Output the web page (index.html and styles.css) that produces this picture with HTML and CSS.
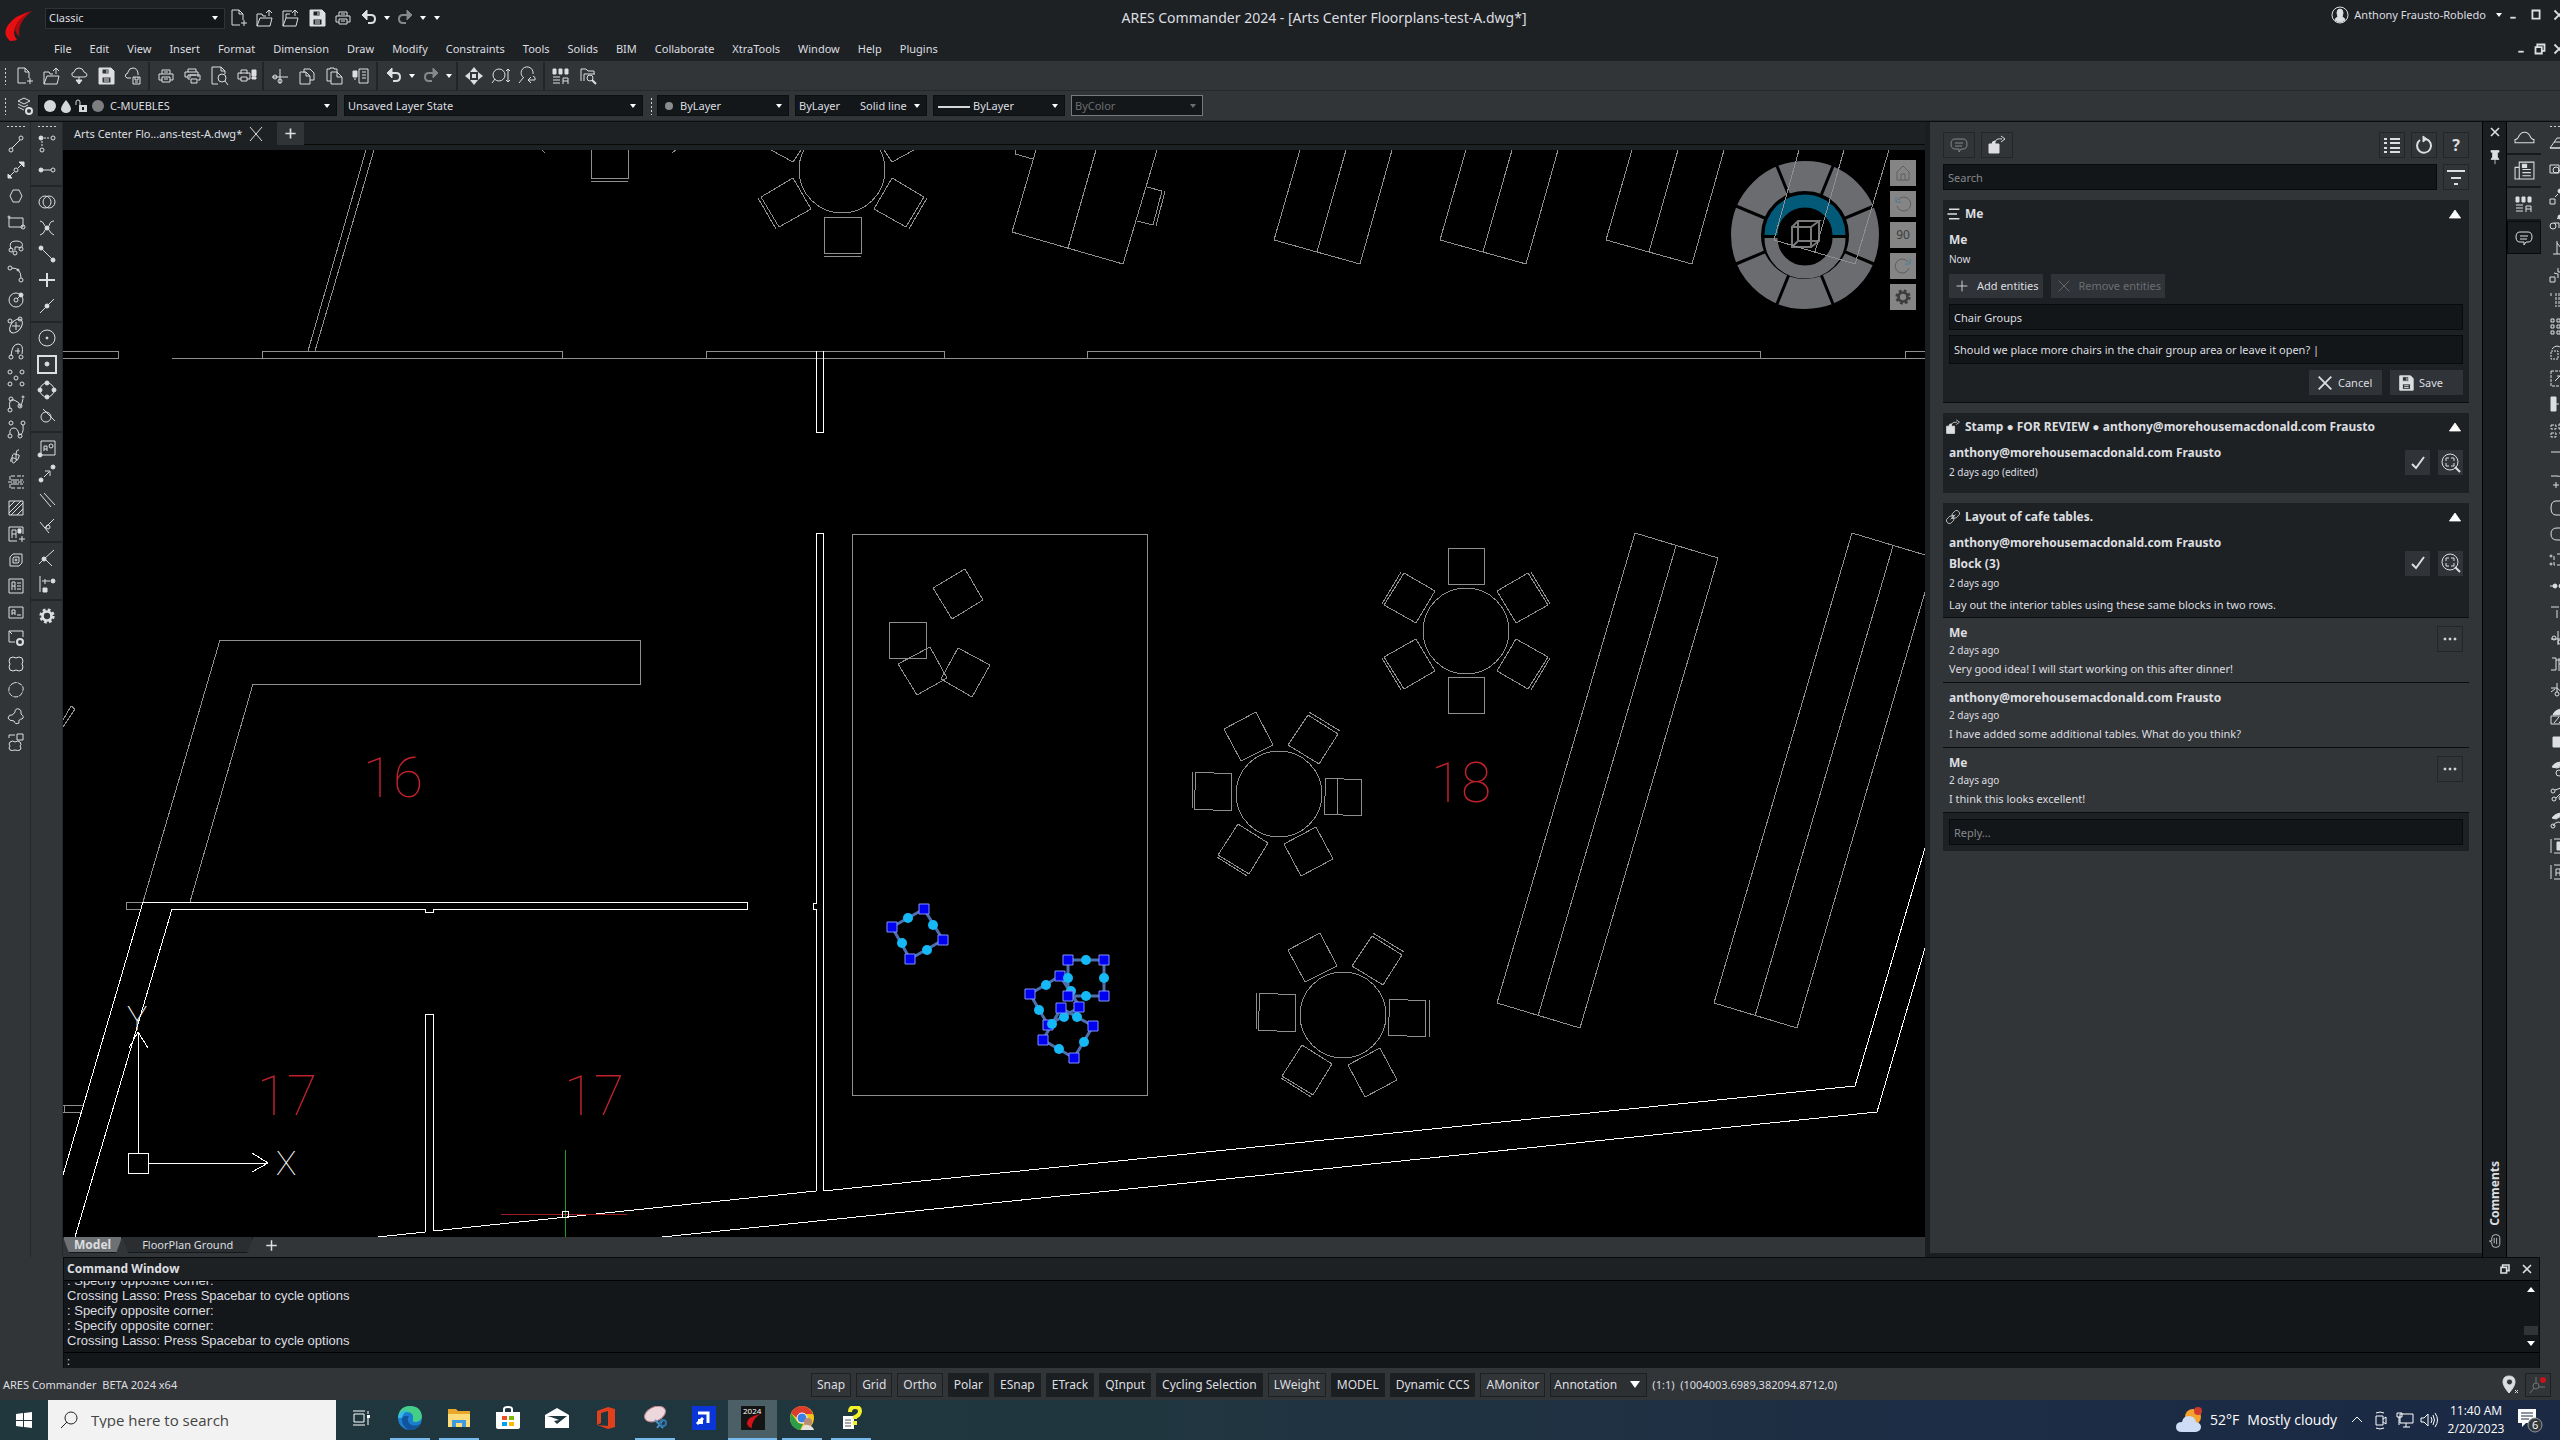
FILE: index.html
```html
<!DOCTYPE html>
<html lang="en">

<head>
    <meta charset="UTF-8">
    <meta name="viewport" content="width=device-width, initial-scale=1.0">
    <title>ARES Commander 2024</title>
    <link rel="stylesheet" href="styles.css">
</head>

<body>
    <!-- shared icons -->
    <svg class="symbols" aria-hidden="true">
        <symbol id="new" viewBox="0 0 20 20"><path d="M11 17H3V2h7l4 4v6M10 2v4h4M15 12v6M12 15h6"/></symbol>
        <symbol id="open" viewBox="0 0 20 20"><path d="M2 18V6h5l1 2h3M2 18l3-8h12l-2 8zM14 8V2M11 5l3-3 3 3"/></symbol>
        <symbol id="save" viewBox="0 0 20 20"><path class="f" d="M3 2h12l3 3v13H3zM6 3v5h7V3zM6 11v6h9v-6z" fill-rule="evenodd"/><path d="M11 4v3M8 13h5M8 15h5"/></symbol>
        <symbol id="print" viewBox="0 0 20 20"><path d="M6 8V4h8v4M6 14H3V8h14v6h-3M6 11h8v5H6zM8 6h4M8 13h4"/></symbol>
        <symbol id="undo" viewBox="0 0 20 20"><path class="w" d="M5 7h7q4 0 4 4t-4 4H9"/><path class="f" d="M3 7l5-5v10z"/></symbol>
        <symbol id="redo" viewBox="0 0 20 20"><path class="w" d="M15 7H8q-4 0-4 4t4 4h3"/><path class="f" d="M17 7l-5-5v10z"/></symbol>
        <symbol id="comment" viewBox="0 0 20 20"><path d="M6 4h8q4 0 4 5t-4 5h-2l-2 3v-3H6q-4 0-4-5t4-5zM6 8h8M6 11h7"/></symbol>
        <symbol id="stamp" viewBox="0 0 20 20"><path class="f" d="M2 9h10v9H2zM5 9q0-3 3-3v3z"/><path d="M8 7q1-4 7-3M14 1l4 3-4 3"/></symbol>
        <symbol id="up" viewBox="0 0 20 20"><path class="f" d="M10 5l7 10H3z"/></symbol>
        <symbol id="check" viewBox="0 0 20 20"><path class="w" d="M4 11l4 4 8-11"/></symbol>
        <symbol id="zoomto" viewBox="0 0 20 20"><circle cx="9" cy="9" r="8"/><path d="M5 8V5h3M10 5h3v3M13 10v3h-3M8 13H5v-3"/><path class="w" d="M14 14l5 5"/></symbol>
        <symbol id="palette" viewBox="0 0 20 20"><path class="f" d="M2 3h3v5H2zM8 3h3v5H8zM14 3h3v5h-3z"/><path d="M2 11h7M2 14h7M2 17h7M12 18v-6h5v6M12 15h5"/></symbol>
        <symbol id="gear" viewBox="0 0 20 20"><circle cx="10" cy="10" r="5" stroke-width="3"/><circle cx="10" cy="10" r="7" stroke-width="3" stroke-dasharray="3 2.5"/></symbol>
        <symbol id="close" viewBox="0 0 20 20"><path class="w" d="M5 5l10 10M15 5L5 15"/></symbol>
        <symbol id="restore" viewBox="0 0 20 20"><path class="w" d="M7 8V5h8v7h-3M5 8h7v7H5z"/></symbol>
        <symbol id="dots" viewBox="0 0 20 20"><circle class="f" cx="5" cy="10" r="1"/><circle class="f" cx="10" cy="10" r="1"/><circle class="f" cx="15" cy="10" r="1"/></symbol>
    </svg>

    <header class="title-bar">
        <svg class="logo" viewBox="0 0 27 30" aria-hidden="true"><path fill="#e80f12" d="M27 0Q10 4 3 14Q-3 23 5 30Q9 30 12 29Q6 22 12 13Q17 5 27 0z"/><path fill="#ae0b0e" d="M27 0Q17 8 15 15Q13 22 15 26Q7 20 12 12Q17 5 27 0z"/></svg>
        <div class="quick">
            <div class="pick workspace"><select aria-label="Workspace"><option>Classic</option></select></div>
            <button class="tool" aria-label="New"><svg class="ico"><use href="#new"/></svg></button>
            <button class="tool" aria-label="Open"><svg class="ico"><use href="#open"/></svg></button>
            <button class="tool" aria-label="Open from cloud"><svg class="ico" viewBox="0 0 20 20"><path d="M2 18V3h9M2 18l3-8h12l-2 8zM5 6h4M14 8V2M11 5l3-3 3 3M5 6v4"/></svg></button>
            <button class="tool" aria-label="Save"><svg class="ico"><use href="#save"/></svg></button>
            <button class="tool" aria-label="Print"><svg class="ico"><use href="#print"/></svg></button>
            <button class="tool" aria-label="Undo"><svg class="ico"><use href="#undo"/></svg></button>
            <button class="drop" aria-label="Undo list"></button>
            <button class="tool dim" aria-label="Redo"><svg class="ico"><use href="#redo"/></svg></button>
            <button class="drop" aria-label="Redo list"></button>
            <button class="drop line" aria-label="Customize"></button>
        </div>
        <h1>ARES Commander 2024 - [Arts Center Floorplans-test-A.dwg*]</h1>
        <div class="user">
            <svg class="ico" viewBox="0 0 20 20"><circle cx="10" cy="10" r="8"/><path class="f" d="M10 4q3 0 3 4l-1 4q3 1 3 3-5 4-10 0 0-2 3-3L7 8q0-4 3-4z"/></svg>
            <span>Anthony Frausto-Robledo</span>
            <button class="drop" aria-label="Account"></button>
            <button class="win" aria-label="Minimize"><svg class="ico" viewBox="0 0 20 20"><path class="w" d="M7 13h6"/></svg></button>
            <button class="win" aria-label="Maximize"><svg class="ico" viewBox="0 0 20 20"><path class="w" d="M6 5h8v9H6z"/></svg></button>
            <button class="win" aria-label="Close"><svg class="ico"><use href="#close"/></svg></button>
        </div>
        <nav class="menu">
            <a href="#">File</a><a href="#">Edit</a><a href="#">View</a><a href="#">Insert</a><a href="#">Format</a><a href="#">Dimension</a><a href="#">Draw</a><a href="#">Modify</a><a href="#">Constraints</a><a href="#">Tools</a><a href="#">Solids</a><a href="#">BIM</a><a href="#">Collaborate</a><a href="#">XtraTools</a><a href="#">Window</a><a href="#">Help</a><a href="#">Plugins</a>
        </nav>
        <div class="doc-win">
            <button class="win" aria-label="Minimize drawing"><svg class="ico" viewBox="0 0 20 20"><path class="w" d="M7 13h6"/></svg></button>
            <button class="win" aria-label="Restore drawing"><svg class="ico"><use href="#restore"/></svg></button>
            <button class="win" aria-label="Close drawing"><svg class="ico"><use href="#close"/></svg></button>
        </div>
    </header>

    <div class="toolbar">
        <span class="grip"></span>
        <button class="tool" aria-label="New"><svg class="ico"><use href="#new"/></svg></button>
        <button class="tool" aria-label="Open"><svg class="ico"><use href="#open"/></svg></button>
        <button class="tool" aria-label="From cloud"><svg class="ico" viewBox="0 0 20 20"><path d="M5 11q-3-1-2-4 2 0 2-1 1-4 5-4t5 4q3 1 3 3t-3 2zM10 11v5"/><path class="f" d="M7 14h6l-3 4z"/></svg></button>
        <button class="tool" aria-label="Save"><svg class="ico"><use href="#save"/></svg></button>
        <button class="tool" aria-label="Save to cloud"><svg class="ico" viewBox="0 0 20 20"><path d="M8 12H4q-3-1-1-4 2 0 2-2 1-4 5-4t5 5v2M10 11h7v7h-7zM12 11v3h3v-3M12 16h3"/></svg></button>
        <i class="sep"></i>
        <button class="tool" aria-label="Print"><svg class="ico"><use href="#print"/></svg></button>
        <button class="tool" aria-label="Batch print"><svg class="ico" viewBox="0 0 20 20"><path d="M5 6V3h8v3M5 11H2V6h13v5M5 9h8M7 13H5V9M7 12V9h10v5h-2M8 13h6v4H8z"/></svg></button>
        <button class="tool" aria-label="Preview"><svg class="ico" viewBox="0 0 20 20"><path d="M8 18H2V1h9l4 4v3M11 1v4h4"/><circle cx="12" cy="12" r="4"/><path d="M15 15l3 4"/></svg></button>
        <button class="tool" aria-label="Publish"><svg class="ico" viewBox="0 0 20 20"><path d="M4 8V4h6v4M4 13H1V7h12v6h-3M4 11h6v4H4z"/><path class="f" d="M15 4h4v6h-4zM15 11h4v2h-4z"/></svg></button>
        <i class="sep"></i>
        <button class="tool" aria-label="Cut"><svg class="ico" viewBox="0 0 20 20"><path d="M10 3v15M2 11h16"/><circle cx="5" cy="11" r="2"/><circle cx="10" cy="15" r="2"/></svg></button>
        <button class="tool" aria-label="Copy"><svg class="ico" viewBox="0 0 20 20"><path d="M7 7V3h6l4 4v7h-4M3 6h6l4 4v8H3zM9 6v4h4"/></svg></button>
        <button class="tool" aria-label="Paste"><svg class="ico" viewBox="0 0 20 20"><path d="M7 15H3V3h3V2h4v1h3v3M7 6h6l5 5v7H7zM13 6v5h5"/></svg></button>
        <button class="tool" aria-label="Properties painter"><svg class="ico" viewBox="0 0 20 20"><path d="M8 3h9v14H8zM11 6h4M11 9h4M11 12h4M3 13h2"/><path class="f" d="M2 5h4v6H2z"/></svg></button>
        <i class="sep"></i>
        <button class="tool" aria-label="Undo"><svg class="ico"><use href="#undo"/></svg></button>
        <button class="drop" aria-label="Undo list"></button>
        <button class="tool dim" aria-label="Redo"><svg class="ico"><use href="#redo"/></svg></button>
        <button class="drop dim" aria-label="Redo list"></button>
        <i class="sep"></i>
        <button class="tool" aria-label="Pan"><svg class="ico" viewBox="0 0 20 20"><path class="f" stroke="none" d="M10 1l4 5H6zM10 19l4-5H6zM1 10l5-4v8zM19 10l-5-4v8zM8 8h4v4H8z"/></svg></button>
        <button class="tool" aria-label="Dynamic zoom"><svg class="ico" viewBox="0 0 20 20"><circle cx="8" cy="9" r="6"/><path d="M4 13l-3 4M17 3v13M15 5l2-2 2 2M15 14l2 2 2-2"/></svg></button>
        <button class="tool" aria-label="Zoom previous"><svg class="ico" viewBox="0 0 20 20"><path d="M6 12A6 6 0 1 1 15 8M5 12l-4 5M10 14h7M10 14l3-3M10 14l3 3M17 14q1-3-2-4"/></svg></button>
        <i class="sep"></i>
        <button class="tool" aria-label="Tool palettes"><svg class="ico"><use href="#palette"/></svg></button>
        <button class="tool" aria-label="Design resources"><svg class="ico" viewBox="0 0 20 20"><path d="M3 15V3h5l2 2h6v3M6 15V8h11"/><circle cx="12" cy="12" r="3"/><path class="w" d="M14 14l4 4"/></svg></button>
    </div>

    <div class="toolbar props">
        <span class="grip"></span>
        <button class="tool" aria-label="Layers manager"><svg class="ico" viewBox="0 0 20 20"><path d="M3 5l6-3 6 3-6 3zM3 8l6 3 4-2M3 11l6 3"/><circle class="w" cx="14" cy="15" r="3"/></svg></button>
        <div class="pick layer">
            <svg class="marks" viewBox="0 0 68 20" aria-hidden="true"><circle cx="11" cy="10" r="6"/><path d="M27 4q5 6 5 9a5 4 0 0 1-10 0q0-3 5-9z"/><path d="M40 9h8v7h-8z"/><path d="M37 9V6q0-2 2-2t2 2v4" fill="none" stroke="#d4d6d8"/><path d="M43 11h2v3h-2z" fill="#14171a"/><circle cx="59" cy="10" r="6" fill="#7c7e80"/></svg>
            <select aria-label="Layer"><option>C-MUEBLES</option></select>
        </div>
        <div class="pick state"><select aria-label="Layer state"><option>Unsaved Layer State</option></select></div>
        <span class="grip"></span>
        <div class="pick small">
            <svg class="marks" viewBox="0 0 19 20" aria-hidden="true"><circle cx="11" cy="10" r="4" fill="#8a8c8e"/></svg>
            <select aria-label="Line color"><option>ByLayer</option></select>
        </div>
        <div class="pick small"><select aria-label="Line style"><option>ByLayer &nbsp; &nbsp; &nbsp; Solid line</option></select></div>
        <div class="pick small">
            <svg class="marks" viewBox="0 0 36 20" aria-hidden="true"><path d="M4 10h32v2H4z"/></svg>
            <select aria-label="Line weight"><option>ByLayer</option></select>
        </div>
        <div class="pick small off"><select aria-label="Print style" disabled><option>ByColor</option></select></div>
    </div>

    <main class="work">
        <div class="side" role="toolbar" aria-label="Draw">
            <span class="grip flat"></span>
            <button class="tool" aria-label="Line"><svg class="ico" viewBox="0 0 20 20"><circle cx="5" cy="16" r="2"/><circle cx="15" cy="4" r="2"/><path d="M6 14l8-8"/></svg></button>
            <button class="tool" aria-label="Infinite line"><svg class="ico" viewBox="0 0 20 20"><circle cx="10" cy="10" r="2"/><path d="M2 18l6-6M12 8l6-6"/><path class="f" d="M2 14v4h4zM18 2v5l-5-5z"/></svg></button>
            <button class="tool" aria-label="Polygon"><svg class="ico" viewBox="0 0 20 20"><path d="M7 4h6l3 6-3 6H7l-3-6z"/></svg></button>
            <button class="tool" aria-label="Rectangle"><svg class="ico" viewBox="0 0 20 20"><path d="M3 6h14v9H3z"/><circle cx="3" cy="5" r="1"/><circle cx="17" cy="15" r="2"/></svg></button>
            <button class="tool" aria-label="Polyline"><svg class="ico" viewBox="0 0 20 20"><path d="M5 11Q2 3 10 3t6 6M9 12V9h3l3 1"/><circle cx="5" cy="12" r="2"/><circle cx="9" cy="15" r="2"/><circle cx="15" cy="11" r="2"/></svg></button>
            <button class="tool" aria-label="Arc"><svg class="ico" viewBox="0 0 20 20"><circle cx="4" cy="4" r="2"/><circle cx="12" cy="6" r="1"/><circle cx="15" cy="16" r="2"/><path d="M6 4q9 0 9 10"/></svg></button>
            <button class="tool" aria-label="Circle"><svg class="ico" viewBox="0 0 20 20"><circle cx="10" cy="10" r="7"/><circle cx="10" cy="10" r="2"/><path d="M11 9l4-4"/><circle class="f" cx="15" cy="5" r="2"/></svg></button>
            <button class="tool" aria-label="Ellipse"><svg class="ico" viewBox="0 0 20 20"><ellipse cx="10" cy="10" rx="8" ry="5" transform="rotate(-50 10 10)"/><path d="M6 10h8M10 6v8"/><circle cx="4" cy="5" r="2"/><circle cx="14" cy="3" r="2"/></svg></button>
            <button class="tool" aria-label="Elliptical arc"><svg class="ico" viewBox="0 0 20 20"><path d="M5 14Q6 2 12 2t4 10M9 9h5M12 6v6"/><circle cx="5" cy="15" r="2"/><circle cx="15" cy="15" r="2"/></svg></button>
            <button class="tool" aria-label="Point"><svg class="ico" viewBox="0 0 20 20"><circle cx="4" cy="4" r="2"/><circle cx="16" cy="4" r="2"/><circle cx="10" cy="10" r="2"/><circle cx="4" cy="16" r="2"/><circle cx="16" cy="16" r="2"/></svg></button>
            <button class="tool" aria-label="Spline"><svg class="ico" viewBox="0 0 20 20"><path d="M4 15Q2 4 8 6t6 6 3-7"/><circle cx="4" cy="16" r="2"/><circle cx="5" cy="5" r="2"/><circle cx="14" cy="12" r="2"/><circle cx="17" cy="3" r="1"/></svg></button>
            <button class="tool" aria-label="Control spline"><svg class="ico" viewBox="0 0 20 20"><path d="M4 14Q3 8 8 8q4 0 5 7 5 0 4-10"/><circle cx="4" cy="16" r="2"/><circle cx="5" cy="3" r="2"/><circle cx="14" cy="16" r="2"/><circle cx="17" cy="3" r="2"/></svg></button>
            <button class="tool" aria-label="Sketch"><svg class="ico" viewBox="0 0 20 20"><path d="M5 16q-1-5 3-4t1 4-3-3 3-5 4 1-1 4-2-3 3-6"/></svg></button>
            <button class="tool" aria-label="Multiline"><svg class="ico" viewBox="0 0 20 20"><path d="M9 4H4v4h5M9 12H4v4h5M2 10h16M9 8h8M9 12h8M11 4h7M11 16h7" stroke-dasharray="4 1"/></svg></button>
            <button class="tool" aria-label="Hatch"><svg class="ico" viewBox="0 0 20 20"><path d="M3 3h14v14H3zM3 9l6-6M3 15L15 3M5 17L17 5M11 17l6-6"/></svg></button>
            <button class="tool" aria-label="Make block"><svg class="ico" viewBox="0 0 20 20"><path d="M11 17H3V3h14v7M6 14V6h4v8M6 10h4M16 12v6M13 15h6"/><path class="f" d="M12 5h3v4h-3z"/></svg></button>
            <button class="tool" aria-label="Region"><svg class="ico" viewBox="0 0 20 20"><path d="M7 4h9v9l-3 3H4V7zM8 7h5v5l-1 1H7V8z"/><circle cx="10" cy="10" r="1"/></svg></button>
            <button class="tool" aria-label="Note"><svg class="ico" viewBox="0 0 20 20"><path d="M3 3h14v14H3zM6 14V6h3v8M6 10h3M11 7h4M11 10h4M11 13h4"/></svg></button>
            <button class="tool" aria-label="Simple note"><svg class="ico" viewBox="0 0 20 20"><path d="M3 5h14v11H3zM6 13V8h3v5M6 11h3M11 13h4"/></svg></button>
            <button class="tool" aria-label="Mask"><svg class="ico" viewBox="0 0 20 20"><path d="M9 14H3V3h14v6M3 3l3 3"/><circle class="w" cx="14" cy="14" r="3"/></svg></button>
            <button class="tool" aria-label="Rectangular cloud"><svg class="ico" viewBox="0 0 20 20"><path d="M4 4q3-2 6 0 3-2 6 0 2 3 0 6 2 3 0 6-3 2-6 0-3 2-6 0-2-3 0-6-2-3 0-6z"/></svg></button>
            <button class="tool" aria-label="Elliptical cloud"><svg class="ico" viewBox="0 0 20 20"><path d="M6 4q4-3 8 0 4 2 3 6-1 5-4 6-3 2-7 0-4-3-3-7 0-3 3-5z" stroke-dasharray="5 1"/></svg></button>
            <button class="tool" aria-label="Freehand cloud"><svg class="ico" viewBox="0 0 20 20"><path d="M9 6q0-4 4-3 3 1 2 5 4 3 1 5-4 0-3 4-4 2-5-2-5 0-6-3 1-4 4-3 1 0 3-3z"/></svg></button>
            <button class="tool" aria-label="Revision cloud"><svg class="ico" viewBox="0 0 20 20"><path d="M3 6V3h6M11 2h6v6h-6zM4 10q3-2 5 0 3-2 5 0 2 3 0 4 2 2 0 4-2 1-5 0-3 1-5 0-2-2 0-4-2-2 0-4z"/></svg></button>
        </div>

        <div class="side" role="toolbar" aria-label="Entity snap">
            <span class="grip flat"></span>
            <button class="tool" aria-label="Track point"><svg class="ico" viewBox="0 0 20 20"><circle class="f" cx="4" cy="4" r="2"/><circle cx="16" cy="4" r="2"/><circle cx="5" cy="16" r="2"/><path d="M7 4h6M5 7v6" stroke-dasharray="2 1"/></svg></button>
            <button class="tool" aria-label="From"><svg class="ico" viewBox="0 0 20 20"><circle class="f" cx="4" cy="10" r="2"/><circle cx="16" cy="10" r="2"/><path d="M6 10h8"/></svg></button>
            <i class="sep"></i>
            <button class="tool" aria-label="Center snap"><svg class="ico" viewBox="0 0 20 20"><circle cx="8" cy="10" r="6"/><circle cx="12" cy="10" r="6"/></svg></button>
            <button class="tool" aria-label="Intersection"><svg class="ico" viewBox="0 0 20 20"><path d="M3 3q3 0 5 5l4 4q2 4 5 5M17 3q-4 0-5 5l-4 4q-1 4-5 5"/><circle class="f" cx="10" cy="10" r="2"/></svg></button>
            <button class="tool" aria-label="Endpoint"><svg class="ico" viewBox="0 0 20 20"><path d="M4 4l12 12"/><circle class="f" cx="4" cy="4" r="2"/><circle class="f" cx="16" cy="16" r="2"/></svg></button>
            <button class="tool" aria-label="Midpoint"><svg class="ico" viewBox="0 0 20 20"><path class="w" d="M2 10h16M10 3v14"/></svg></button>
            <button class="tool" aria-label="Nearest"><svg class="ico" viewBox="0 0 20 20"><path d="M3 17L17 3"/><circle class="f" cx="10" cy="10" r="2"/></svg></button>
            <i class="sep"></i>
            <button class="tool" aria-label="Center"><svg class="ico" viewBox="0 0 20 20"><circle cx="10" cy="10" r="8"/><circle class="f" cx="10" cy="10" r="1"/></svg></button>
            <button class="tool" aria-label="Node"><svg class="ico" viewBox="0 0 20 20"><path d="M1 2h18v17H1z" stroke-width="2"/><circle class="f" cx="10" cy="10" r="2"/></svg></button>
            <button class="tool" aria-label="Quadrant"><svg class="ico" viewBox="0 0 20 20"><circle cx="10" cy="10" r="7"/><circle class="f" cx="10" cy="3" r="2"/><circle class="f" cx="10" cy="17" r="2"/><circle class="f" cx="3" cy="10" r="2"/><circle class="f" cx="17" cy="10" r="2"/></svg></button>
            <button class="tool" aria-label="Tangent"><svg class="ico" viewBox="0 0 20 20"><circle cx="9" cy="11" r="5"/><path d="M6 3l12 12"/></svg></button>
            <i class="sep"></i>
            <button class="tool" aria-label="Insertion"><svg class="ico" viewBox="0 0 20 20"><path d="M4 3h14v14H4zM7 13V8h3v5M7 11h3"/><circle cx="14" cy="8" r="2"/><circle class="f" cx="3" cy="17" r="2"/></svg></button>
            <button class="tool" aria-label="Extension"><svg class="ico" viewBox="0 0 20 20"><circle class="f" cx="4" cy="16" r="2"/><circle class="f" cx="16" cy="3" r="2"/><path d="M7 13l5-5M8 7h5v5"/></svg></button>
            <button class="tool" aria-label="Parallel"><svg class="ico" viewBox="0 0 20 20"><path d="M3 4l11 13M7 3l11 12"/></svg></button>
            <button class="tool" aria-label="Perpendicular"><svg class="ico" viewBox="0 0 20 20"><path d="M3 6l9 11M8 12l9-9"/><circle cx="11" cy="11" r="2"/></svg></button>
            <i class="sep"></i>
            <button class="tool" aria-label="Apparent intersection"><svg class="ico" viewBox="0 0 20 20"><path d="M7 11l10-9M8 11l7 7M6 12l-4 4"/><circle class="f" cx="7" cy="11" r="2"/></svg></button>
            <button class="tool" aria-label="Distance"><svg class="ico" viewBox="0 0 20 20"><path d="M3 2v16M5 7h8M8 5v5"/><circle class="f" cx="16" cy="7" r="2"/><path class="f" d="M6 14h4v4H6z"/></svg></button>
            <i class="sep"></i>
            <button class="tool" aria-label="Snap settings"><svg class="ico gear"><use href="#gear"/></svg></button>
        </div>

        <section class="drawing">
            <div class="doc-tabs">
                <div class="doc-tab"><span>Arts Center Flo...ans-test-A.dwg*</span><button aria-label="Close drawing"><svg class="ico" viewBox="0 0 20 20"><path d="M4 3l12 14M16 3L4 17"/></svg></button></div>
                <button class="plus" aria-label="New drawing"><svg class="ico" viewBox="0 0 20 20"><path class="w" d="M10 4v12M4 10h12"/></svg></button>
            </div>

            <div class="canvas">
                <svg class="plan" viewBox="63 150 1862 1087" preserveAspectRatio="xMinYMin slice" role="img" aria-label="Floor plan">
                    <defs>
                        <g id="chair"><path d="M62-58L82-26 50-8 31-40zM65-59L84-27"/></g>
                        <g id="round">
                            <circle r="43"/>
                            <path d="M-55-65L-23-82-6-49-38-33zM29-79L59-60 40-30 9-49zM30-82L61-63M-83-22L-47-20-48 17-85 15zM-86-22L-87 15M47-16L83-14 82 22 45 20zM-41 30L-11 49-30 80-61 61zM-62 63L-32 82M37 33L54 65 22 82 5 50z"/>
                        </g>
                    </defs>

                    <!-- furniture -->
                    <g class="thin">
                        <path d="M366 150L308 351M374 150L315 351M63 351H118V358H63M172 358H1925M262 358V351H562V358M706 358V351H944V358M1087 358V351H1760V358M1905 358V351H1925"/>
                        <path d="M591 150V178H628V150M591 181H628M542 150l3 3M672 153l4-3"/>
                        <circle cx="842" cy="170" r="43"/>
                        <path d="M824 217H861V253H824zM824 256H861M793 178L811 209 779 227 761 197zM758 198L776 229M892 178L874 209 906 227 924 197zM927 198L909 229M771 150L793 162 801 150M914 150L892 162 884 150"/>
                        <path d="M1036 150L1012 232 1123 264 1157 150M1096 150L1068 248M1147 187L1162 191 1153 225 1137 221M1165 191L1156 226M1016 150L1015 154 1033 159"/>
                        <path d="M1300 150L1274 240 1360 264 1392 150M1346 150L1317 252"/>
                        <path d="M1466 150L1440 240 1526 264 1558 150M1512 150L1483 252"/>
                        <path d="M1632 150L1606 240 1692 264 1724 150M1678 150L1649 252"/>
                        <path d="M640 640H220L143 902M640 640V684H253L190 902M63 720L71 706 75 709 63 727M143 902H126V909H141M63 1105H84M63 1112H82M64 1105V1112"/>
                        <path d="M852 534H1147V1095H852z"/>
                        <path d="M933 588L965 569 983 600 952 619zM889 622H926V658H889zM898 664L930 647 947 678 917 695zM958 648L990 665 972 697 941 679z"/>
                        <g transform="translate(1466 631)">
                            <circle r="43"/>
                            <path d="M-18-83H18V-47H-18zM-18 46H18V82H-18z"/>
                            <use href="#chair"/><use href="#chair" transform="scale(-1 1)"/><use href="#chair" transform="scale(1 -1)"/><use href="#chair" transform="scale(-1 -1)"/>
                        </g>
                        <g transform="translate(1279 794)"><use href="#round"/><path d="M59-16L58 21"/></g>
                        <g transform="translate(1343 1015)"><use href="#round"/><path d="M87-15L86 23"/></g>
                        <path d="M1635 533L1718 558 1580 1028 1497 1003zM1676 546L1538 1016M1852 533L1935 558 1797 1028 1714 1003zM1893 546L1755 1016"/>
                    </g>

                    <!-- walls -->
                    <g class="wall">
                        <path d="M816 351V432H823V351M823 1191V533H816V903H813V909H816V1191"/>
                        <path d="M63 1175L143 902H747V909H433V912H425V909H172L75 1237M378 1237L425 1232V1014H433V1231L816 1191M823 1191L1855 1086 1925 848M662 1237L1877 1112 1925 948"/>
                    </g>
                    <g class="wall">
                        <path d="M128 1153H148V1173H128zM148 1163H268M252 1153L268 1163 252 1172M138 1153V1032M129 1048L138 1032 148 1048"/>
                    </g>
                    <text class="axis" x="127" y="1030">Y</text>
                    <text class="axis" x="276" y="1175">X</text>

                    <g class="room">
                        <text x="363" y="797">16</text>
                        <text x="257" y="1115">17</text>
                        <text x="564" y="1115">17</text>
                        <text x="1431" y="802">18</text>
                    </g>

                    <!-- crosshair -->
                    <path class="red" d="M501 1214H627"/>
                    <path class="green" d="M565 1150V1237"/>
                    <path class="wall" d="M562 1211H568V1217H562z"/>

                    <!-- selected chairs -->
                    <g class="glow">
                        <path d="M892 927L924 909 943 940 910 959zM1068 960H1104V996H1068zM1030 994L1060 976 1080 1007 1048 1025zM1061 1008L1093 1026 1074 1058 1043 1040z"/>
                    </g>
                    <g class="corner">
                        <path d="M887 922h10v10h-10zM919 904h10v10h-10zM938 935h10v10h-10zM905 954h10v10h-10z"/>
                        <path d="M1025 989h10v10h-10zM1055 971h10v10h-10zM1043 1020h10v10h-10z"/>
                    </g>
                    <g class="middle">
                        <circle cx="908" cy="918" r="5"/><circle cx="933" cy="925" r="5"/><circle cx="927" cy="950" r="5"/><circle cx="902" cy="943" r="5"/>
                        <circle cx="1046" cy="985" r="5"/><circle cx="1071" cy="991" r="5"/><circle cx="1039" cy="1010" r="5"/><circle cx="1064" cy="1017" r="5"/>
                        <circle cx="1086" cy="960" r="5"/><circle cx="1104" cy="978" r="5"/><circle cx="1086" cy="996" r="5"/><circle cx="1068" cy="978" r="5"/>
                        <circle cx="1077" cy="1017" r="5"/><circle cx="1084" cy="1042" r="5"/><circle cx="1059" cy="1049" r="5"/><circle cx="1052" cy="1024" r="5"/>
                    </g>
                    <g class="corner">
                        <path d="M1063 955h10v10h-10zM1099 955h10v10h-10zM1099 991h10v10h-10zM1063 991h10v10h-10z"/>
                        <path d="M1056 1003h10v10h-10zM1074 1002h10v10h-10zM1088 1021h10v10h-10zM1069 1053h10v10h-10zM1038 1035h10v10h-10z"/>
                    </g>

                    <!-- view wheel -->
                    <g transform="translate(1805 235)">
                        <circle r="59" fill="none" stroke="#6a6c70" stroke-width="30"/>
                        <path d="M-28-69L28 69M28-69L-28 69M-69-29L69 29M69-29L-69 29" stroke="#000" stroke-width="3"/>
                        <circle r="43" fill="#000"/>
                        <path d="M-34 0A34 34 0 0 1 34 0" fill="none" stroke="#025a78" stroke-width="13"/>
                        <path d="M-34 3A34 34 0 0 0 34 3" fill="none" stroke="#6a6c70" stroke-width="13"/>
                        <path d="M-13-8H6V12H-13zM-13-8L-7-14H14L6-8M14-14V6L6 12M-7-14V6H14M-7 6L-13 12" fill="none" stroke="#77797b" stroke-width="2"/>
                    </g>
                    <path class="thin" d="M1799 150L1774 240 1855 264 1889 150M1844 150L1815 252"/>
                </svg>
                <div class="view-tools">
                    <button aria-label="Home view"><svg class="ico" viewBox="0 0 20 20"><path d="M4 9l6-6 6 6v8H4zM8 17v-6h4v6"/></svg></button>
                    <button aria-label="Rotate left"><svg class="ico" viewBox="0 0 20 20"><path d="M5 6a7 7 0 1 1-1 6"/><path d="M3 3v5h5" stroke="#4f7896"/></svg></button>
                    <button class="angle" aria-label="Rotation angle">90</button>
                    <button aria-label="Rotate right"><svg class="ico" viewBox="0 0 20 20"><path d="M15 6a7 7 0 1 0 1 6"/><path d="M17 3v5h-5" stroke="#3b8099"/></svg></button>
                    <button class="set" aria-label="View settings"><svg class="ico gear"><use href="#gear"/></svg></button>
                </div>
            </div>

            <div class="sheets">
                <button class="sheet on">Model</button>
                <button class="sheet">FloorPlan Ground</button>
                <button class="add" aria-label="Add sheet"><svg class="ico" viewBox="0 0 20 20"><path class="w" d="M10 3v14M3 10h14"/></svg></button>
            </div>
        </section>

        <aside class="comments">
            <div class="panel-tools">
                <button class="sq wide dim" aria-label="New comment"><svg class="ico"><use href="#comment"/></svg></button>
                <button class="sq wide" aria-label="New stamp"><svg class="ico"><use href="#stamp"/></svg></button>
                <span class="fill"></span>
                <button class="sq" aria-label="Collapse all"><svg class="ico" viewBox="0 0 20 20"><path class="w" d="M8 4h10M8 8h10M8 13h10M8 17h10M2 4h3M2 8h3M2 13h3M2 17h3"/></svg></button>
                <button class="sq" aria-label="Refresh"><svg class="ico" viewBox="0 0 20 20"><path d="M6 5a7 7 0 1 0 6-1" stroke-width="2"/><path class="f" d="M9 1l4 3-4 3z"/></svg></button>
                <button class="sq help" aria-label="Help">?</button>
            </div>
            <div class="search">
                <input type="text" placeholder="Search" aria-label="Search comments">
                <button class="sq" aria-label="Filter"><svg class="ico" viewBox="0 0 20 20"><path class="w" d="M1 4h18M5 11h10M8 17h4"/></svg></button>
            </div>

            <article class="card edit">
                <h2><svg class="ico" viewBox="0 0 20 20"><path class="w" d="M5 4h13M3 10h12M5 16h13"/></svg>Me<button class="fold" aria-label="Collapse"><svg class="ico"><use href="#up"/></svg></button></h2>
                <b>Me</b>
                <time>Now</time>
                <div class="acts">
                    <button class="flat-btn"><svg class="ico" viewBox="0 0 20 20"><path d="M10 4v12M4 10h12"/></svg>Add entities</button>
                    <button class="flat-btn" disabled><svg class="ico" viewBox="0 0 20 20"><path d="M4 4l12 12M16 4L4 16"/></svg>Remove entities</button>
                </div>
                <input type="text" value="Chair Groups" aria-label="Title">
                <input class="tall" type="text" value="Should we place more chairs in the chair group area or leave it open? |" aria-label="Comment">
                <div class="acts end">
                    <button class="flat-btn"><svg class="ico" viewBox="0 0 20 20"><path class="w" d="M3 3l14 14M17 3L3 17"/></svg>Cancel</button>
                    <button class="flat-btn"><svg class="ico"><use href="#save"/></svg>Save</button>
                </div>
            </article>

            <article class="card stamp">
                <h2><svg class="ico"><use href="#stamp"/></svg>Stamp ● FOR REVIEW ● anthony@morehousemacdonald.com Frausto<button class="fold" aria-label="Collapse"><svg class="ico"><use href="#up"/></svg></button></h2>
                <div class="split">
                    <div><b>anthony@morehousemacdonald.com Frausto</b><time>2 days ago (edited)</time></div>
                    <button class="flat-sq" aria-label="Resolve"><svg class="ico"><use href="#check"/></svg></button>
                    <button class="flat-sq" aria-label="Zoom to"><svg class="ico"><use href="#zoomto"/></svg></button>
                </div>
            </article>

            <article class="card thread">
                <h2><svg class="ico" viewBox="0 0 20 20"><path d="M9 6l4-4q2-1 4 1t1 4l-4 4-5 1zM11 14l-4 4q-2 1-4-1t-1-4l4-4 5-1zM7 13l6-6"/></svg>Layout of cafe tables.<button class="fold" aria-label="Collapse"><svg class="ico"><use href="#up"/></svg></button></h2>
                <div class="split">
                    <div><b>anthony@morehousemacdonald.com Frausto</b><b>Block (3)</b><time>2 days ago</time></div>
                    <button class="flat-sq" aria-label="Resolve"><svg class="ico"><use href="#check"/></svg></button>
                    <button class="flat-sq" aria-label="Zoom to"><svg class="ico"><use href="#zoomto"/></svg></button>
                </div>
                <p>Lay out the interior tables using these same blocks in two rows.</p>
            </article>
            <div class="reply"><button class="sq more" aria-label="More"><svg class="ico"><use href="#dots"/></svg></button><b>Me</b><time>2 days ago</time><p>Very good idea! I will start working on this after dinner!</p></div>
            <div class="reply"><b>anthony@morehousemacdonald.com Frausto</b><time>2 days ago</time><p>I have added some additional tables. What do you think?</p></div>
            <div class="reply"><button class="sq more" aria-label="More"><svg class="ico"><use href="#dots"/></svg></button><b>Me</b><time>2 days ago</time><p>I think this looks excellent!</p></div>
            <div class="write"><input type="text" placeholder="Reply..." aria-label="Reply"></div>
        </aside>

        <div class="panel-title">
            <button aria-label="Close panel"><svg class="ico"><use href="#close"/></svg></button>
            <button aria-label="Pin panel"><svg class="ico" viewBox="0 0 20 20"><path class="f" d="M5 2h10v2h-2v6l2 3H5l2-3V4H5z"/><path d="M10 13v6"/></svg></button>
            <span>Comments</span>
            <svg class="ico turn"><use href="#comment"/></svg>
        </div>

        <div class="panel-tabs">
            <button aria-label="Cloud storage"><svg class="ico big" viewBox="0 0 20 20"><path d="M1 15v-3q2 0 3-2 2-5 6-5t6 5q1 2 3 2v3z"/></svg></button>
            <button aria-label="Properties"><svg class="ico big" viewBox="0 0 20 20"><path d="M5 2h14v16H1V7h4zM5 7v11M8 9h8M8 12h8M8 15h8"/><path class="f" d="M8 4h4v3H8z"/></svg></button>
            <button aria-label="Tool palettes"><svg class="ico"><use href="#palette"/></svg></button>
            <button class="on" aria-label="Comments"><svg class="ico"><use href="#comment"/></svg></button>
        </div>

        <div class="side edge" role="toolbar" aria-label="Modify">
            <span class="grip flat"></span>
            <button class="tool" aria-label="Delete"><svg class="ico" viewBox="0 0 20 20"><path d="M1 14L8 4h9l-6 10zM5 8h6M1 14h10"/></svg></button>
            <button class="tool" aria-label="Copy"><svg class="ico" viewBox="0 0 20 20"><path d="M1 5h9v8H1zM10 10l6 6"/><circle cx="7" cy="10" r="3"/></svg></button>
            <button class="tool" aria-label="Move"><svg class="ico" viewBox="0 0 20 20"><path d="M1 13h5v5H1zM6 11l3-3"/><circle class="f" cx="11" cy="5" r="2"/></svg></button>
            <button class="tool" aria-label="Rotate"><svg class="ico" viewBox="0 0 20 20"><circle cx="4" cy="14" r="3"/><path d="M5 11h5v5M8 7l5-5"/><circle class="f" cx="11" cy="5" r="2"/></svg></button>
            <button class="tool" aria-label="Mirror"><svg class="ico" viewBox="0 0 20 20"><path d="M8 3v13M8 5l9 11H4"/></svg></button>
            <button class="tool" aria-label="Move copy"><svg class="ico" viewBox="0 0 20 20"><path d="M1 13h5v5H1zM5 9l4 1v4M9 4v4h5"/></svg></button>
            <button class="tool" aria-label="Align"><svg class="ico" viewBox="0 0 20 20"><path d="M2 3v3M7 3v14M10 3v14M13 9v8M13 13h5" stroke-dasharray="3 1"/></svg></button>
            <button class="tool" aria-label="Pattern"><svg class="ico" viewBox="0 0 20 20"><path d="M2 3h3v3H2zM8 3h3v3H8zM14 3h3v3h-3zM2 9h3v3H2zM8 9h3v3H8zM14 9h3v3h-3zM2 15h3v3H2zM8 15h3v3H8zM14 15h3v3h-3z"/></svg></button>
            <button class="tool" aria-label="Rotate copy"><svg class="ico" viewBox="0 0 20 20"><path d="M2 9h7v8H2z" stroke-dasharray="2 1"/><path d="M3 7q5-6 10 0M12 12l6 5"/></svg></button>
            <button class="tool" aria-label="Scale"><svg class="ico" viewBox="0 0 20 20"><path d="M2 3h16M2 3v15h16" stroke-dasharray="3 1"/><path d="M6 13l5-5M8 8h4v4"/></svg></button>
            <button class="tool" aria-label="Stretch"><svg class="ico" viewBox="0 0 20 20"><path class="f" d="M2 3h5v14H2z"/><path d="M7 10h3M12 6v11M12 10h6"/></svg></button>
            <button class="tool" aria-label="Change length"><svg class="ico" viewBox="0 0 20 20"><path d="M2 5h5v4H2zM2 13h5v4H2zM10 4h6v5h-6zM10 13h6" stroke-dasharray="3 1"/></svg></button>
            <button class="tool" aria-label="Chamfer"><svg class="ico" viewBox="0 0 20 20"><path d="M2 6h9l6 5"/></svg></button>
            <button class="tool" aria-label="Fillet"><svg class="ico" viewBox="0 0 20 20"><path d="M2 4h6q6 0 7 6M7 10v6M4 13h6"/></svg></button>
            <button class="tool" aria-label="Offset"><svg class="ico" viewBox="0 0 20 20"><path d="M18 3H7q-5 0-5 7t5 7h11"/><circle class="f" cx="13" cy="10" r="1"/></svg></button>
            <button class="tool" aria-label="Slot"><svg class="ico" viewBox="0 0 20 20"><path d="M18 4H8q-6 0-6 6t6 6h10"/></svg></button>
            <button class="tool" aria-label="Trim"><svg class="ico" viewBox="0 0 20 20"><path d="M8 4h10M5 6v9h13" stroke-dasharray="4 2"/><circle cx="2" cy="6" r="1"/><circle cx="2" cy="14" r="1"/></svg></button>
            <button class="tool" aria-label="Split"><svg class="ico" viewBox="0 0 20 20"><path d="M1 10h5M10 10h5"/><circle class="f" cx="6" cy="10" r="2"/><circle class="f" cx="12" cy="10" r="2"/></svg></button>
            <button class="tool" aria-label="Extend"><svg class="ico" viewBox="0 0 20 20"><path d="M2 5h16M8 8v10" stroke-dasharray="8 2"/></svg></button>
            <button class="tool" aria-label="Power trim"><svg class="ico" viewBox="0 0 20 20"><path d="M2 11h15M9 3v14"/><circle cx="5" cy="10" r="2"/><circle cx="11" cy="14" r="2"/></svg></button>
            <button class="tool" aria-label="Weld"><svg class="ico" viewBox="0 0 20 20"><path d="M3 4h4v12H2M10 4v13M10 10h8M7 6h9"/></svg></button>
            <button class="tool" aria-label="Explode"><svg class="ico" viewBox="0 0 20 20"><path d="M2 8h6l8 7M8 3v9M2 12l4-3"/><circle cx="8" cy="14" r="2"/></svg></button>
            <button class="tool" aria-label="Edit hatch"><svg class="ico" viewBox="0 0 20 20"><path class="f" d="M4 9q2-6 10-6v5z"/><path d="M2 10h15v8H2zM5 17l5-6M10 17l5-6"/></svg></button>
            <button class="tool" aria-label="Block"><svg class="ico" viewBox="0 0 20 20"><path class="f" d="M4 5h14v10H4z"/></svg></button>
            <button class="tool" aria-label="Edit spline"><svg class="ico" viewBox="0 0 20 20"><path class="f" d="M3 9q3-6 14-5v6q-5-3-9 0z"/><circle cx="10" cy="15" r="3"/></svg></button>
            <button class="tool" aria-label="Edit nodes"><svg class="ico" viewBox="0 0 20 20"><circle cx="4" cy="7" r="2"/><circle cx="5" cy="15" r="2"/><circle cx="12" cy="14" r="2"/><path d="M6 6l9-3M7 14l8-8"/></svg></button>
            <button class="tool" aria-label="Edit polyline"><svg class="ico" viewBox="0 0 20 20"><path class="f" d="M3 8q4-6 14-5v4q-6-2-10 2z"/><path d="M4 16q4-8 13 0"/><circle cx="4" cy="16" r="2"/></svg></button>
            <button class="tool" aria-label="Edit block"><svg class="ico" viewBox="0 0 20 20"><path d="M2 3v14M5 3h14M5 17h14"/><path class="f" d="M8 6h9v8H8z"/></svg></button>
            <button class="tool" aria-label="Edit attribute"><svg class="ico" viewBox="0 0 20 20"><path d="M2 3v14M5 3h14M5 17h14M7 14V7h4v7M7 11h4"/><path class="f" d="M13 7h3v3h-3z"/></svg></button>
        </div>
    </main>

    <section class="command">
        <h2>Command Window<span class="fill"></span><button aria-label="Float"><svg class="ico"><use href="#restore"/></svg></button><button aria-label="Close"><svg class="ico"><use href="#close"/></svg></button></h2>
        <div class="log">
            <div class="lines">
                <p>: Specify opposite corner:</p>
                <p>Crossing Lasso: Press Spacebar to cycle options</p>
                <p>: Specify opposite corner:</p>
                <p>: Specify opposite corner:</p>
                <p>Crossing Lasso: Press Spacebar to cycle options</p>
            </div>
            <div class="scroll"><i class="tri"></i><i class="thumb"></i><i class="tri down"></i></div>
        </div>
        <input type="text" value=":" aria-label="Command">
    </section>

    <footer class="status">
        <span class="version">ARES Commander &nbsp;BETA 2024 x64</span>
        <button>Snap</button><button>Grid</button><button>Ortho</button><button class="on">Polar</button><button class="on">ESnap</button><button class="on">ETrack</button><button class="on">QInput</button><button class="on">Cycling Selection</button><button>LWeight</button><button class="on">MODEL</button><button class="on">Dynamic CCS</button><button>AMonitor</button>
        <div class="pick scale"><select aria-label="Annotation"><option>Annotation</option></select></div>
        <span>(1:1)&nbsp; (1004003.6989,382094.8712,0)</span>
        <span class="fill"></span>
        <svg class="ico" viewBox="0 0 20 20"><path class="f" fill-rule="evenodd" d="M9 1q6 0 6 6 0 4-6 11Q3 11 3 7q0-6 6-6zM9 4a3 3 0 1 0 1 0z"/><path d="M15 15l3 3M18 15l-3 3"/></svg>
        <button class="axis-btn" aria-label="Custom coordinate display"><svg class="ico" viewBox="0 0 20 20"><g stroke="#707376"><circle cx="8" cy="11" r="3"/><path d="M8 2v6M11 12h6M6 13l-4 5"/></g><circle cx="15" cy="5" r="3" fill="#c4151c" stroke="none"/></svg></button>
    </footer>

    <div class="taskbar">
        <button class="start" aria-label="Start"><svg viewBox="0 0 16 16" width="16" height="16"><path fill="#fff" d="M0 2l7-1v7H0zM8 1l8-1v8H8zM0 9h7v6l-7-1zM8 9h8v7l-8-1z"/></svg></button>
        <label class="find"><svg class="ico" viewBox="0 0 20 20"><circle cx="12" cy="8" r="6"/><path d="M8 12l-6 6"/></svg><input type="text" placeholder="Type here to search"></label>
        <button class="app" aria-label="Task view"><svg viewBox="0 0 24 24"><path d="M4 5h12M4 19h12M5 8h10v8H5zM19 5v3M19 11v8" fill="none" stroke="#fff" stroke-width="1"/><path fill="#fff" d="M18 9h3v3h-3z"/></svg></button>
        <button class="app run" aria-label="Edge"><svg viewBox="0 0 24 24"><circle cx="12" cy="12" r="12" fill="#1b7fd0"/><path fill="#45cf86" d="M0 12Q1 0 12 0t12 11q-1 5-8 5-2-1-1-3 1-7-6-7-6 0-9 6z"/><path fill="#35b8e8" d="M0 12Q2 3 11 4q-6 2-7 8z"/><path fill="#12549c" d="M4 12q-1 8 7 12 7 0 11-6-6 3-10 0-4-4-1-8-5-1-7 2z"/></svg></button>
        <button class="app run" aria-label="File Explorer"><svg viewBox="0 0 24 24"><path fill="#e9a72c" d="M1 3h8l2 2h12v16H1z"/><path fill="#ffdc7a" d="M1 8h22v13H1z"/><path fill="#3f9be0" d="M5 21v-7h14v7h-4v-4H9v4z"/></svg></button>
        <button class="app" aria-label="Store"><svg viewBox="0 0 24 24"><path d="M8 7V3q0-2 4-2t4 2v4" fill="none" stroke="#fff" stroke-width="2"/><path fill="#fff" d="M0 6h24v15q0 2-3 2H3q-3 0-3-2z"/><path fill="#f04e23" d="M6 10h5v4H6z"/><path fill="#7db700" d="M13 10h5v4h-5z"/><path fill="#00a2ed" d="M6 16h5v4H6z"/><path fill="#fdb900" d="M13 16h5v4h-5z"/></svg></button>
        <button class="app" aria-label="Mail"><svg viewBox="0 0 24 24"><path fill="#fff" d="M0 9l12-7 12 7v13H0z"/><path fill="#20363f" d="M2 10h20l-10 8-3-3 5-1-8-3z"/></svg></button>
        <button class="app" aria-label="Office"><svg viewBox="0 0 24 24"><path fill="#e0401c" fill-rule="evenodd" d="M3 5l11-4 7 2v18l-7 2-11-4 11 1V5L7 7v10l-4 2z"/></svg></button>
        <button class="app run" aria-label="Snipping Tool"><svg viewBox="0 0 24 24"><ellipse cx="12" cy="8" rx="11" ry="7" fill="#ecd8dc" stroke="#c3858e" transform="rotate(-25 12 8)"/><path d="M12 14l8 8M20 14l-6 8" stroke="#4b93c4" stroke-width="2" fill="none"/><circle cx="20" cy="17" r="3" fill="none" stroke="#2f75ad" stroke-width="2"/></svg></button>
        <button class="app" aria-label="Radeon"><svg viewBox="0 0 24 24"><path fill="#0a35d8" d="M0 0h24v24H0z"/><path d="M5 18l6-6M6 7h10v10" fill="none" stroke="#fff" stroke-width="3"/><path fill="#fff" d="M6 13h5v5H6z"/></svg></button>
        <button class="app run on" aria-label="ARES"><svg viewBox="0 0 24 24"><path fill="#141414" d="M0 0h24v24H0z"/><path fill="#d3131a" d="M19 8Q6 11 6 17q0 4 5 5-1-7 8-14z"/><text x="2" y="8" fill="#fff" font-size="8">2024</text></svg></button>
        <button class="app run" aria-label="Chrome"><svg viewBox="0 0 24 24"><circle cx="12" cy="12" r="12" fill="#f3c318"/><path fill="#dc3c2e" d="M1 7q4-7 11-7t11 8H12q-4 0-4 5z"/><path fill="#2c9d49" d="M1 7l7 10 5 1-3 6Q0 22 0 12z"/><circle cx="12" cy="12" r="5" fill="#3c7fe8" stroke="#fff"/><circle cx="18" cy="16" r="4" fill="#b98b77"/><path fill="#e7e2df" d="M11 24q2-6 7-5t6 5z"/></svg></button>
        <button class="app run" aria-label="Help"><svg viewBox="0 0 24 24"><path fill="#fff" d="M4 10h11v13H4z"/><path d="M6 14h6M6 17h6M6 20h6" stroke="#555"/><path d="M11 6q0-5 5-5t5 4-5 6v2" fill="none" stroke="#f3f02a" stroke-width="4"/><path fill="#f3f02a" d="M14 15h4v4h-4z"/></svg></button>
        <span class="fill"></span>
        <div class="weather"><svg viewBox="0 0 26 26"><circle cx="17" cy="10" r="8" fill="#f5a32c"/><circle cx="22" cy="4" r="4" fill="#cf3a2c"/><path fill="#cfdcf6" d="M6 25q-6 0-6-5t6-5q1-6 7-6t7 6q5 1 5 5t-5 5z"/></svg><span>52°F</span><span>Mostly cloudy</span></div>
        <svg class="ico" viewBox="0 0 20 20"><path d="M5 12l5-5 5 5"/></svg>
        <svg class="ico" viewBox="0 0 20 20"><path d="M5 6h7v9H5zM12 9l3-2v7l-3-2M5 3q4-2 8 0M5 18q4 2 8 0"/></svg>
        <svg class="ico" viewBox="0 0 20 20"><path d="M5 4h13v9H5zM11 13v4M8 17h7M2 3h5v4H2zM4 7v8"/></svg>
        <svg class="ico" viewBox="0 0 20 20"><path d="M2 8h3l4-4v12l-4-4H2zM12 7q2 3 0 6M14 5q3 5 0 10M16 3q5 7 0 14"/></svg>
        <div class="clock"><span>11:40 AM</span><span>2/20/2023</span></div>
        <button class="notes" aria-label="Notifications"><svg viewBox="0 0 26 28"><path fill="#fff" d="M1 3h18v14H9l-4 4v-4H1z"/><path d="M4 7h12M4 10h12M4 13h8" stroke="#1d2c44"/><circle cx="18" cy="19" r="7" fill="#33383c" stroke="#90979d"/><text x="15" y="23" fill="#fff" font-size="11">6</text></svg></button>
    </div>
</body>
</html>
```
FILE: styles.css
```css
* {
    box-sizing: border-box;
}

body {
    margin: 0;
    height: 100vh;
    display: flex;
    flex-direction: column;
    overflow: hidden;
    background-color: #323538;
    color: #dcdee0;
    font-family: "Noto Sans", sans-serif;
    font-size: 11px;
    line-height: 16px;
}

button, input, select {
    font: inherit;
    color: inherit;
    border: 0;
    margin: 0;
    padding: 0;
    background: none;
}

h1, h2, p {
    margin: 0;
    font-size: inherit;
    font-weight: inherit;
}

.symbols {
    position: absolute;
    width: 0;
    height: 0;
}

.ico {
    display: block;
    flex: none;
    width: 20px;
    height: 20px;
    fill: none;
    stroke: currentColor;
    stroke-width: 1px;
}

.gear {
    width: 18px;
    height: 18px;
}

.f {
    fill: currentColor;
}

.w {
    stroke-width: 2px;
}

.fill {
    flex: 1;
}

.dim {
    color: #85888b;
}

/* title and menu */
.title-bar {
    display: grid;
    grid-template-columns: 37px 423px 1fr 372px;
    grid-template-rows: 36px 25px;
    background-color: #1e2124;
    align-items: center;
}

.logo {
    grid-row: 1 / 3;
    width: 27px;
    height: 30px;
    margin: 0 0 10px 5px;
}

.quick {
    display: flex;
    align-items: center;
    padding-left: 8px;
}

.quick .tool {
    width: 26px;
    height: 24px;
}

.title-bar h1 {
    text-align: center;
    font-size: 14px;
}

.user, .doc-win {
    display: flex;
    align-items: center;
    justify-content: flex-end;
    white-space: nowrap;
    overflow: hidden;
}

.user {
    padding-bottom: 6px;
}

.user span {
    margin: 0 8px 0 4px;
}

.win {
    flex: none;
    width: 23px;
}

.win .ico {
    width: 18px;
    height: 18px;
}

.title-bar .win:last-child {
    width: 10px;
}

.doc-win .win {
    width: 19px;
}

.menu {
    grid-column: 2 / 4;
    display: flex;
    padding-left: 8px;
}

.menu a {
    color: inherit;
    text-decoration: none;
    padding: 0 9px;
}

.tool {
    flex: none;
    display: grid;
    place-items: center;
    width: 27px;
    height: 28px;
}

.drop {
    width: 10px;
    height: 20px;
    display: grid;
    place-items: center;
}

.drop::before, .pick::after {
    content: "";
    border: 3px solid transparent;
    border-top: 4px solid #fff;
    border-bottom: 0;
}

.drop.line {
    margin-left: 4px;
}

.drop.line::before {
    box-shadow: 0 -4px 0 -2px #fff;
}

/* toolbars */
.toolbar {
    display: flex;
    align-items: center;
    height: 30px;
    border-bottom: 1px solid #26292b;
}

.grip {
    flex: none;
    width: 3px;
    height: 18px;
    margin: 0 4px;
    background-image: radial-gradient(#d0d2d4 1px, transparent 1px);
    background-size: 3px 4px;
}

.grip.flat {
    width: 20px;
    height: 3px;
    margin: 3px 6px;
    background-size: 4px 3px;
}

.sep {
    flex: none;
    width: 6px;
    height: 28px;
    background: linear-gradient(90deg, transparent 2px, #222527 2px, #222527 4px, transparent 4px);
}

.pick {
    position: relative;
    display: flex;
    align-items: center;
    height: 21px;
    background-color: #14171a;
    border: 1px solid #0d0f11;
}

.pick::after {
    position: absolute;
    right: 6px;
    pointer-events: none;
}

.pick select {
    appearance: none;
    flex: 1;
    min-width: 0;
    height: 19px;
    padding: 0 3px;
}

.marks {
    height: 20px;
    fill: #d4d6d8;
}

.workspace {
    width: 180px;
    margin-right: 1px;
    border-color: #303336;
}

.layer {
    width: 299px;
}

.state {
    width: 299px;
    margin: 0 3px 0 7px;
}

.small {
    width: 132px;
    margin-right: 6px;
}

.small:last-child {
    border-color: #77797b;
}

.off {
    color: #6b6e71;
}

.off::after {
    border-top-color: #6b6e71;
}

.off select:disabled {
    opacity: 1;
    color: #6b6e71;
}

/* work area */
.work {
    flex: 1;
    min-height: 0;
    display: grid;
    grid-template-columns: 31px 32px 1fr 557px 25px 34px 19px;
    border-top: 1px solid #0b0c0d;
}

.side {
    display: flex;
    flex-direction: column;
    overflow: hidden;
    border-right: 1px solid #25282a;
}

.side .tool {
    width: 31px;
    height: 26px;
}

.side .sep {
    width: 31px;
    height: 6px;
    background: linear-gradient(transparent 2px, #222527 2px, #222527 4px, transparent 4px);
}

.edge {
    border-right: 0;
    padding-left: 2px;
}

.edge .ico {
    width: 22px;
}

.drawing {
    display: flex;
    flex-direction: column;
    min-width: 0;
}

.doc-tabs {
    display: flex;
    height: 28px;
    background-color: #1e2124;
    border-bottom: 5px solid #1e2124;
    box-shadow: inset 0 -1px 0 #070808;
}

.doc-tab {
    display: flex;
    align-items: center;
    gap: 4px;
    padding: 0 11px;
    background-color: #1e2124;
}

.plus {
    width: 27px;
    display: grid;
    place-items: center;
    background-color: #313437;
}

.plus .ico {
    width: 17px;
    height: 17px;
}

.canvas {
    position: relative;
    flex: 1;
    min-height: 0;
    background-color: #000;
}

.plan {
    display: block;
    width: 100%;
    height: 100%;
}

.thin, .wall, .red, .green {
    fill: none;
    stroke: #8f8f8f;
    stroke-width: 1;
    shape-rendering: crispEdges;
}

.wall {
    stroke: #fff;
}

.red {
    stroke: #a01b22;
}

.green {
    stroke: #1f9e2c;
}

.axis {
    font: 100 34px Roboto, sans-serif;
    fill: #fff;
}

.room text {
    font: 100 55px Roboto, sans-serif;
    fill: #c0222c;
}

.glow {
    fill: none;
    stroke: #4d6fae;
    stroke-width: 3;
}

.corner {
    fill: #0000f0;
    stroke: #7f93ff;
}

.middle {
    fill: #14b9f5;
}

.view-tools {
    position: absolute;
    top: 10px;
    right: 9px;
    display: grid;
    gap: 5px;
}

.view-tools button {
    width: 26px;
    height: 26px;
    display: grid;
    place-items: center;
    background-color: #858585;
    color: #5c5e60;
}

.view-tools .angle {
    color: #3b3d3f;
    font-size: 12px;
}

.view-tools .set {
    color: #3b3d3f;
}

/* sheet tabs */
.sheets {
    display: flex;
    height: 20px;
    padding-bottom: 4px;
}

.sheet {
    padding: 0 19px;
    background-color: #2b2e31;
    border: 1px solid #15181a;
    border-top: 0;
    clip-path: polygon(0 0, 100% 0, calc(100% - 6px) 100%, 6px 100%);
    line-height: 14px;
}

.sheet.on {
    padding: 0 10px;
    background-color: #6e7173;
    font-size: 12px;
    font-weight: bold;
}

.add {
    width: 36px;
    display: grid;
    place-items: center;
}

.add .ico {
    width: 15px;
    height: 15px;
}

/* comments panel */
.comments {
    border-left: 5px solid #1b1e20;
    border-bottom: 4px solid #1b1e20;
    padding: 10px 13px 0 13px;
}

.panel-tools, .search {
    display: flex;
    gap: 6px;
    margin-bottom: 6px;
}

.sq {
    flex: none;
    width: 26px;
    height: 26px;
    display: grid;
    place-items: center;
    border: 1px solid #232628;
}

.sq.wide {
    width: 32px;
}

.help {
    font-size: 16px;
    font-weight: bold;
}

.comments input {
    display: block;
    width: 100%;
    height: 26px;
    padding: 0 4px;
    background-color: #131619;
    border: 1px solid #090a0b;
}

.comments input::placeholder {
    color: #85888b;
}

.card {
    background-color: #1e2124;
    padding: 0 6px;
}

.card h2 {
    display: flex;
    align-items: center;
    gap: 4px;
    height: 28px;
    margin-left: -4px;
    font-size: 12px;
    font-weight: bold;
}

.card h2 .ico {
    width: 16px;
    height: 16px;
}

.fold {
    margin-left: auto;
    color: #fff;
}

.comments b, .comments time {
    display: block;
    height: 21px;
    font-size: 12px;
    line-height: 21px;
}

.comments time {
    font-size: 10px;
    line-height: 19px;
}

.edit {
    margin-top: 10px;
    padding-bottom: 7px;
    border-bottom: 1px solid #0b0c0d;
}

.card h2 + b, .split b:first-child {
    margin-top: 1px;
}

.acts {
    display: flex;
    gap: 8px;
    margin: 3px 0 6px;
}

.acts.end {
    justify-content: flex-end;
    margin: 6px 0 0;
}

.flat-btn {
    display: flex;
    align-items: center;
    gap: 6px;
    height: 24px;
    padding: 0 4px;
    background-color: #303337;
}

.flat-btn:disabled {
    color: #6b6e71;
}

.flat-btn .ico {
    width: 18px;
    height: 18px;
}

.end .flat-btn {
    height: 25px;
    width: 73px;
    padding: 0 7px;
    gap: 4px;
}

.comments .tall {
    height: 29px;
    margin-top: 5px;
}

.stamp {
    margin: 10px 0;
    min-height: 80px;
}

.split {
    display: flex;
    align-items: center;
    gap: 8px;
}

.split div {
    flex: 1;
}

.flat-sq {
    width: 25px;
    height: 25px;
    display: grid;
    place-items: center;
    background-color: #303337;
}

.thread {
    border-bottom: 1px solid #0b0c0d;
}

.thread p {
    height: 22px;
    line-height: 20px;
}

.reply {
    position: relative;
    height: 65px;
    padding: 4px 6px 0;
    border-bottom: 1px solid #0b0c0d;
}

.reply time {
    height: 18px;
    line-height: 14px;
}

.more {
    position: absolute;
    top: 8px;
    right: 6px;
}

.write {
    padding: 6px;
    background-color: #1e2124;
}

.panel-title {
    display: flex;
    flex-direction: column;
    align-items: center;
    gap: 5px;
    padding: 0 0 6px;
    background-color: #1b1e21;
    border-right: 1px solid #000;
    border-left: 1px solid #000;
    font-size: 12px;
    font-weight: bold;
}

.panel-title .ico {
    width: 16px;
}

.panel-title span {
    writing-mode: vertical-rl;
    transform: rotate(180deg);
    margin-top: auto;
}

.turn {
    transform: rotate(90deg);
}

.panel-tabs button {
    display: grid;
    place-items: center;
    width: 100%;
    height: 33px;
    border-bottom: 2px solid #17191b;
}

.panel-tabs .on {
    background-color: #1a1d20;
    border: 1px solid #090a0b;
}

.big {
    width: 21px;
    height: 21px;
}

/* command window */
.command {
    margin: 0 20px 0 63px;
    background-color: #14171a;
    border: 1px solid #090a0b;
    border-bottom: 0;
}

.command h2 {
    display: flex;
    align-items: center;
    gap: 4px;
    height: 23px;
    padding: 0 3px;
    background-color: #1e2124;
    border-bottom: 1px solid #000;
    font-size: 12px;
    font-weight: bold;
}

.command h2 .ico {
    width: 18px;
    height: 16px;
}

.log {
    display: flex;
    height: 72px;
    border-bottom: 1px solid #000;
    font: 13px/15px "Liberation Sans", sans-serif;
}

.lines {
    flex: 1;
    display: flex;
    flex-direction: column;
    justify-content: flex-end;
    overflow: hidden;
    padding: 0 4px 4px 3px;
}

.lines p {
    flex: none;
}

.scroll {
    width: 16px;
    display: flex;
    flex-direction: column;
    align-items: center;
    padding: 6px 0;
}

.tri {
    border: 4px solid transparent;
    border-top: 0;
    border-bottom: 5px solid #fff;
}

.down {
    transform: rotate(180deg);
}

.thumb {
    width: 14px;
    height: 9px;
    margin: auto 0 6px;
    background-color: #313437;
}

.command input {
    display: block;
    width: 100%;
    height: 15px;
    padding: 0 3px;
}

/* status bar */
.status {
    display: flex;
    align-items: center;
    gap: 5px;
    height: 32px;
    padding: 1px 9px 0 3px;
}

.version {
    flex: 0 0 803px;
}

.status button, .scale {
    height: 24px;
    padding: 0 5px;
    border: 1px solid #1d2022;
    font-size: 12px;
}

.status .on {
    background-color: #1c1f22;
}

.status .scale {
    width: 97px;
    padding: 0;
    background-color: #2d3033;
}

.scale::after {
    border-width: 7px 5px 0;
}

.status .axis-btn {
    padding: 0 2px;
}

/* taskbar */
.taskbar {
    display: flex;
    align-items: center;
    height: 40px;
    background: linear-gradient(90deg, #20373e, #20363f 45%, #1d2d45 75%, #1b2944);
    color: #fff;
    font-family: "Open Sans", sans-serif;
    font-size: 12px;
}

.start {
    width: 48px;
    height: 40px;
    display: grid;
    place-items: center;
}

.find {
    display: flex;
    align-items: center;
    gap: 12px;
    width: 288px;
    height: 40px;
    padding-left: 11px;
    background-color: #f2f2f2;
    color: #222;
    font-size: 15px;
}

.find input {
    flex: 1;
    min-width: 0;
}

.find input::placeholder {
    color: #444;
}

.app {
    width: 49px;
    height: 40px;
    padding: 6px 0 0;
    display: grid;
    justify-items: center;
    align-content: start;
}

.app svg {
    width: 24px;
    height: 24px;
}

.app.run {
    background: linear-gradient(#76b9ed, #76b9ed) bottom / 40px 2px no-repeat;
}

.app.on {
    background-color: #4b5f66;
    background-size: 100% 2px;
}

.weather {
    display: flex;
    align-items: center;
    gap: 8px;
    margin-right: 10px;
    font-size: 14px;
}

.weather svg {
    width: 26px;
    height: 26px;
}

.taskbar > .ico {
    margin-right: 4px;
}

.clock {
    display: grid;
    text-align: center;
    width: 66px;
    line-height: 18px;
}

.notes {
    width: 26px;
    height: 28px;
    margin: 0 17px 0 8px;
}
```
